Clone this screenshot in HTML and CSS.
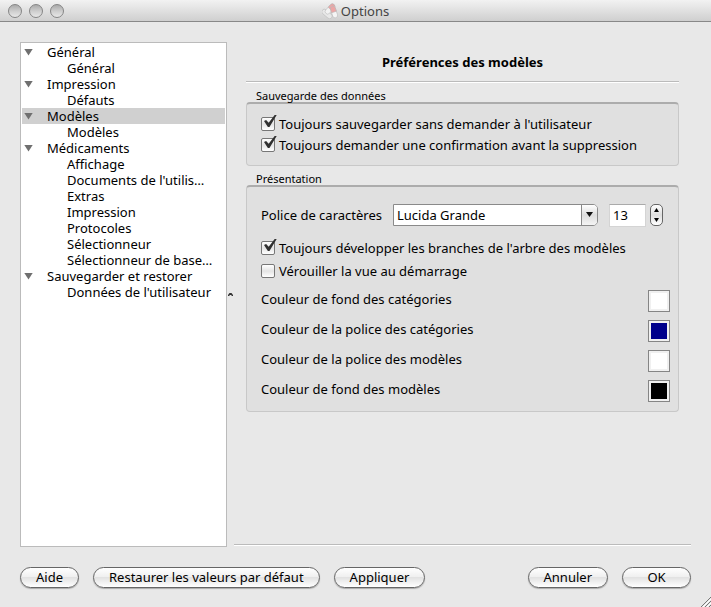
FILE: index.html
```html
<!DOCTYPE html>
<html lang="fr">
<head>
<meta charset="utf-8">
<meta name="viewport" content="width=device-width, initial-scale=1">
<title>Options</title>
<link rel="stylesheet" href="styles.css">
</head>
<body>
<div class="window">
  <header class="titlebar">
    <div class="lights">
      <button class="light" type="button" aria-label="Fermer"></button>
      <button class="light" type="button" aria-label="Réduire"></button>
      <button class="light" type="button" aria-label="Agrandir"></button>
    </div>
    <h1 class="window-title">
      <svg class="app-icon" width="16" height="16" viewBox="0 0 16 16" aria-hidden="true">
        <g stroke="#b4b4b4" stroke-width=".5">
          <rect x="-2.500" y="-6" width="5" height="12" rx="2.500" fill="#e8e8e8" transform="translate(5 11) rotate(-50)"/>
          <rect x="-2.500" y="-6" width="5" height="12" rx="2.500" fill="#f2f2f2" transform="translate(8 6) rotate(42)"/>
          <path d="M-2.500 0v-3.500a2.500 2.500 0 0 1 5 0v3.500z" fill="#eda6a6" transform="translate(8 6) rotate(42)"/>
          <rect x="-2.500" y="-6" width="5" height="12" rx="2.500" fill="#f5f5f5" transform="translate(12 9) rotate(-18)"/>
          <path d="M-2.500 0v-3.500a2.500 2.500 0 0 1 5 0v3.500z" fill="#eda6a6" transform="translate(12 9) rotate(-18)"/>
        </g>
      </svg>
      Options
    </h1>
  </header>

  <div class="content">
    <nav class="tree" aria-label="Sections">
      <ul>
        <li><a class="node parent" href="#"><span class="arrow"></span>Général</a>
          <ul><li><a class="node child" href="#">Général</a></li></ul></li>
        <li><a class="node parent" href="#"><span class="arrow"></span>Impression</a>
          <ul><li><a class="node child" href="#">Défauts</a></li></ul></li>
        <li><a class="node parent selected" href="#" aria-current="page"><span class="arrow"></span>Modèles</a>
          <ul><li><a class="node child" href="#">Modèles</a></li></ul></li>
        <li><a class="node parent" href="#"><span class="arrow"></span>Médicaments</a>
          <ul>
            <li><a class="node child" href="#">Affichage</a></li>
            <li><a class="node child" href="#">Documents de l'utilis…</a></li>
            <li><a class="node child" href="#">Extras</a></li>
            <li><a class="node child" href="#">Impression</a></li>
            <li><a class="node child" href="#">Protocoles</a></li>
            <li><a class="node child" href="#">Sélectionneur</a></li>
            <li><a class="node child" href="#">Sélectionneur de base…</a></li>
          </ul></li>
        <li><a class="node parent" href="#"><span class="arrow"></span>Sauvegarder et restorer</a>
          <ul><li><a class="node child" href="#">Données de l'utilisateur</a></li></ul></li>
      </ul>
    </nav>
    <div class="splitter">
      <svg width="5" height="3" viewBox="0 0 5 3" aria-hidden="true"><path d="M0 3V2l1.500-2h2L5 2v1H4L3 2H2L1 3z" fill="#333"/></svg>
    </div>
    <main class="page">
      <h2 class="page-title">Préférences des modèles</h2>

      <section class="group" aria-labelledby="g1">
        <h3 class="legend" id="g1">Sauvegarde des données</h3>
        <div class="box">
          <label class="check"><input type="checkbox" checked>Toujours sauvegarder sans demander à l'utilisateur</label>
          <label class="check"><input type="checkbox" checked>Toujours demander une confirmation avant la suppression</label>
        </div>
      </section>

      <section class="group" aria-labelledby="g2">
        <h3 class="legend" id="g2">Présentation</h3>
        <div class="box roomy">
          <div class="font-row">
            <label for="font">Police de caractères</label>
            <div class="combo">
              <select id="font"><option>Lucida Grande</option></select>
              <span class="combo-arrow"></span>
            </div>
            <input class="size" type="text" value="13" aria-label="Taille">
            <div class="stepper">
              <button type="button" aria-label="Augmenter"><span class="up"></span></button>
              <button type="button" aria-label="Diminuer"><span class="down"></span></button>
            </div>
          </div>
          <div class="checks">
            <label class="check"><input type="checkbox" checked>Toujours développer les branches de l'arbre des modèles</label>
            <label class="check"><input type="checkbox">Vérouiller la vue au démarrage</label>
          </div>
          <div class="colors">
            <div class="color-row"><label for="c1">Couleur de fond des catégories</label><button class="well" id="c1" type="button"><span class="swatch white"></span></button></div>
            <div class="color-row"><label for="c2">Couleur de la police des catégories</label><button class="well" id="c2" type="button"><span class="swatch navy"></span></button></div>
            <div class="color-row"><label for="c3">Couleur de la police des modèles</label><button class="well" id="c3" type="button"><span class="swatch white"></span></button></div>
            <div class="color-row"><label for="c4">Couleur de fond des modèles</label><button class="well" id="c4" type="button"><span class="swatch black"></span></button></div>
          </div>
        </div>
      </section>
    </main>
  </div>

  <footer class="actions">
    <button class="push" type="button">Aide</button>
    <button class="push" type="button">Restaurer les valeurs par défaut</button>
    <button class="push" type="button">Appliquer</button>
    <span class="spacer"></span>
    <button class="push" type="button">Annuler</button>
    <button class="push" type="button">OK</button>
  </footer>
  <svg class="grip" width="11" height="11" viewBox="0 0 11 11" aria-hidden="true">
    <path d="M1 11L11 1M5 11l6-6M9 11l2-2" stroke="#777" fill="none"/>
    <path d="M2 12L12 2M6 12l6-6" stroke="#fff" fill="none"/>
  </svg>
</div>
</body>
</html>
```

FILE: styles.css
```css
* { box-sizing: border-box; }

body {
  margin: 0;
  background: #e8e8e8;
  color: #000;
  font: 13px/16px "Noto Sans", "Open Sans", sans-serif;
}

button, input, select { font: inherit; color: inherit; margin: 0; padding: 0; }
ul { list-style: none; margin: 0; padding: 0; }

.window {
  position: relative;
  display: flex;
  flex-direction: column;
  min-height: 100vh;
}

/* Title bar */
.titlebar {
  display: grid;
  grid-template-columns: 1fr auto 1fr;
  align-items: center;
  height: 22px;
  padding: 0 8px;
  border-bottom: 1px solid #888;
  background: linear-gradient(#f2f2f2, #cfcfcf);
}
.lights { display: flex; gap: 7px; }
.light {
  width: 14px;
  height: 14px;
  border: 1px solid #858585;
  border-radius: 50%;
  background: linear-gradient(#aaa, #d0d0d0 55%, #e8e8e8);
}
.window-title {
  display: flex;
  align-items: center;
  gap: 3px;
  margin: 0;
  color: #444;
  font-size: 13px;
  font-weight: 400;
}

/* Body */
.content {
  flex: 1;
  display: flex;
  padding: 20px 20px 0;
}
.tree {
  flex: none;
  width: 207px;
  padding: 1px;
  border: 1px solid #bbb;
  background: #fff;
}
.node {
  display: flex;
  align-items: center;
  height: 16px;
  color: inherit;
  text-decoration: none;
  white-space: nowrap;
}
.parent { padding-left: 2px; }
.child { padding-left: 45px; }
.selected { background: #d0d0d0; }
.arrow {
  width: 9px;
  height: 7px;
  margin-right: 14px;
  background: #6f6f6f;
  clip-path: polygon(0 0, 100% 0, 50% 100%);
}
.splitter {
  flex: none;
  display: flex;
  align-items: center;
  justify-content: center;
  width: 7px;
}
.page {
  flex: 1;
  min-width: 0;
  margin-bottom: 2px;
  padding: 0 12px;
  border-bottom: 1px solid #bbb;
  box-shadow: 0 1px #fff;
}
.page-title {
  margin: 0 0 8px;
  padding: 12px 0 11px;
  border-bottom: 1px solid #bbb;
  box-shadow: 0 1px #fff;
  font-size: 13px;
  line-height: 16px;
  text-align: center;
}

/* Groups */
.group { margin-bottom: 7px; }
.legend {
  margin: 0;
  padding-left: 10px;
  font-size: 11px;
  font-weight: 400;
  line-height: 12px;
}
.box {
  padding: 9px 8px 10px 14px;
  border: 1px solid #c8c8c8;
  border-top: 2px solid #acacac;
  border-radius: 4px;
  background: #e0e0e0;
}
.roomy { padding-top: 16px; padding-bottom: 9px; }
.check {
  display: flex;
  align-items: center;
  gap: 4px;
  height: 21px;
  white-space: nowrap;
}
.check input {
  appearance: none;
  position: relative;
  width: 14px;
  height: 14px;
  border: 1px solid #777;
  border-radius: 2px;
  background: linear-gradient(#fff, #e4e4e4 50%, #fff);
}
.check input:checked::after {
  content: "";
  position: absolute;
  left: 2px;
  top: -3px;
  width: 13px;
  height: 13px;
  background: #303030;
  clip-path: polygon(0 50%, 16% 42%, 36% 64%, 82% 4%, 100% 0, 42% 96%, 30% 96%);
}
.checks { margin: 9px 0 8px; }
.checks .check { height: 23px; }

.font-row {
  display: flex;
  align-items: center;
  height: 24px;
  padding-right: 7px;
}
.font-row label { flex: none; width: 132px; white-space: nowrap; }
.combo { position: relative; flex: 1; min-width: 0; }
.combo select {
  appearance: none;
  display: block;
  width: 100%;
  height: 22px;
  padding-left: 3px;
  border: 1px solid #8a8a8a;
  border-radius: 0 5px 5px 0;
  background: #fff;
}
.combo-arrow {
  position: absolute;
  top: 1px;
  right: 1px;
  bottom: 1px;
  width: 16px;
  border-left: 1px solid #888;
  border-radius: 0 4px 4px 0;
  background: linear-gradient(#fff, #ddd 50%, #f4f4f4);
  pointer-events: none;
}
.combo-arrow::after {
  content: "";
  position: absolute;
  left: 4px;
  top: 7px;
  width: 7px;
  height: 5px;
  background: #111;
  clip-path: polygon(0 0, 100% 0, 50% 100%);
}
.size {
  width: 37px;
  height: 23px;
  margin: 0 4px 0 11px;
  padding-left: 3px;
  border: 1px solid #d4d4d4;
  border-top-color: #aaa;
  background: #fff;
}
.stepper {
  display: flex;
  flex-direction: column;
  width: 13px;
  height: 22px;
  border: 1px solid #666;
  border-radius: 5px;
  background: linear-gradient(#fff, #ddd 50%, #fff);
}
.stepper button {
  flex: 1;
  display: flex;
  align-items: center;
  justify-content: center;
  border: 0;
  background: none;
}
.up, .down { width: 5px; height: 4px; background: #000; }
.up { clip-path: polygon(50% 0, 100% 100%, 0 100%); }
.down { clip-path: polygon(0 0, 100% 0, 50% 100%); }

.colors { display: grid; gap: 8px; }
.color-row { display: flex; justify-content: space-between; }
.color-row label { padding-top: 1px; }
.well {
  width: 22px;
  height: 22px;
  padding: 2px;
  border: 1px solid #858585;
  background: #f0f0f0;
}
.swatch { display: block; height: 16px; }
.white { background: #fff; }
.navy { background: #00008b; }
.black { background: #000; }

/* Footer */
.actions {
  display: flex;
  gap: 14px;
  padding: 20px 20px 19px;
}
.spacer { flex: 1; }
.push {
  min-width: 58px;
  height: 21px;
  padding: 0 15px 2px;
  border: 1px solid #666;
  border-radius: 11px;
  background: linear-gradient(#fff, #f0f0f0 45%, #e2e2e2 50%, #fff);
  box-shadow: 0 1px 1px #aaa;
  white-space: nowrap;
}
.push:last-child { min-width: 69px; }
.grip { position: absolute; right: 0; bottom: 0; }
```
